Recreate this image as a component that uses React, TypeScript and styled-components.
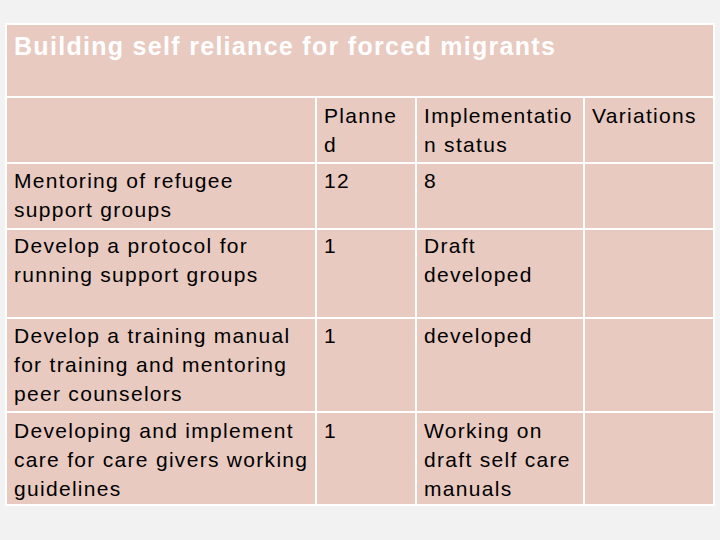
import React from "react";
import styled, { createGlobalStyle } from "styled-components";

const Global = createGlobalStyle`
  html, body { margin: 0; padding: 0; background: #f2f2f2; }
  body { font-family: "Liberation Sans", Arial, sans-serif; }
`;

const Page = styled.div`
  width: 720px;
  height: 540px;
  padding: 23px 0 0 5px;
  box-sizing: border-box;
`;

const Grid = styled.div`
  display: grid;
  grid-template-columns: 308px 98px 166px 128px;
  grid-template-rows: 71px 64px 64px 87px 92px 91px;
  gap: 2px;
  padding: 2px;
  width: max-content;
  background: #ffffff;
`;

const Title = styled.div`
  grid-column: 1 / -1;
  background: #e8cac1;
  color: #ffffff;
  font-weight: bold;
  font-size: 25px;
  letter-spacing: 1.3px;
  line-height: 30px;
  padding: 6px 7px 0;
  white-space: nowrap;
`;

const Cell = styled.div<{ $pt?: number }>`
  background: #e8cac1;
  color: #000000;
  font-size: 21px;
  letter-spacing: 1.3px;
  line-height: 29px;
  padding: ${(p) => p.$pt ?? 3}px 0 0 7px;
  white-space: pre;
  overflow: hidden;
`;

const rows: { cells: string[]; pt?: number }[] = [
  { cells: ["", "Planne\nd", "Implementatio\nn status", "Variations"], pt: 3 },
  { cells: ["Mentoring of refugee\nsupport groups", "12", "8", ""], pt: 2 },
  { cells: ["Develop a protocol for\nrunning support groups", "1", "Draft\ndeveloped", ""], pt: 1 },
  {
    cells: ["Develop a training manual\nfor training and mentoring\npeer counselors", "1", "developed", ""],
    pt: 2,
  },
  {
    cells: [
      "Developing and implement\ncare for care givers working\nguidelines",
      "1",
      "Working on\ndraft self care\nmanuals",
      "",
    ],
    pt: 3,
  },
];

export default function App() {
  return (
    <>
      <Global />
      <Page>
        <Grid>
          <Title>Building self reliance for forced migrants</Title>
          {rows.map((r, i) =>
            r.cells.map((c, j) => (
              <Cell key={`${i}-${j}`} $pt={r.pt}>
                {c}
              </Cell>
            ))
          )}
        </Grid>
      </Page>
    </>
  );
}
